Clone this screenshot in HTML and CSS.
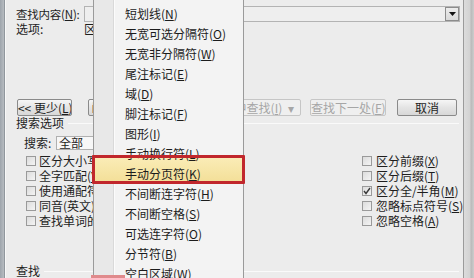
FILE: index.html
```html
<!DOCTYPE html>
<html lang="zh-CN">
<head>
<meta charset="utf-8">
<title>查找和替换</title>
<link rel="stylesheet" href="styles.css">
</head>
<body>
<div class="screen">
  <div class="frame-left"></div>
  <div class="dialog">
    <div class="find-row">
      <span class="label">查找内容(<u>N</u>):</span>
      <div class="combo">
        <span class="combo-btn"><svg width="7" height="4" viewBox="0 0 7 4"><path d="M0 0H7L3.5 4Z" fill="#111"/></svg></span>
      </div>
    </div>
    <div class="opt-row"><span class="label">选项:</span><span>区分全/半角</span></div>
    <div class="btn-row">
      <button class="btn btn-less">&lt;&lt; 更少(<u>L</u>)</button>
      <button class="btn btn-read">阅读突出显示(<u>R</u>)</button>
      <button class="btn btn-in disabled">在以下项中查找(<u>I</u>) <span class="caret">▾</span></button>
      <button class="btn btn-next disabled">查找下一处(<u>F</u>)</button>
      <button class="btn btn-cancel">取消</button>
    </div>
    <div class="group-head"><span>搜索选项</span><span class="rule"></span></div>
    <div class="search-row"><span class="search-label">搜索:</span><div class="select">全部</div></div>
    <div class="checks">
      <div class="col col-left">
        <div class="chk"><span class="box"></span><span>区分大小写(<u>H</u>)</span></div>
        <div class="chk"><span class="box"></span><span>全字匹配(<u>Y</u>)</span></div>
        <div class="chk"><span class="box"></span><span>使用通配符(<u>U</u>)</span></div>
        <div class="chk"><span class="box"></span><span>同音(英文)(<u>K</u>)</span></div>
        <div class="chk"><span class="box"></span><span>查找单词的所有形式(英文)(<u>W</u>)</span></div>
      </div>
      <div class="col col-right">
        <div class="chk"><span class="box"></span><span>区分前缀(<u>X</u>)</span></div>
        <div class="chk"><span class="box"></span><span>区分后缀(<u>T</u>)</span></div>
        <div class="chk"><span class="box checked"><svg width="8" height="8" viewBox="0 0 8 8"><path d="M1 4L3 6.5L7 1" fill="none" stroke="#3a3a3a" stroke-width="1.4"/></svg></span><span>区分全/半角(<u>M</u>)</span></div>
        <div class="chk"><span class="box"></span><span>忽略标点符号(<u>S</u>)</span></div>
        <div class="chk"><span class="box"></span><span>忽略空格(<u>A</u>)</span></div>
      </div>
    </div>
    <div class="group-head foot"><span>查找</span><span class="rule"></span></div>
  </div>
  <div class="frame-right"></div>

  <div class="menu">
    <div class="hl-fill"></div>
    <div class="item">短划线(<u>N</u>)</div>
    <div class="item">无宽可选分隔符(<u>O</u>)</div>
    <div class="item">无宽非分隔符(<u>W</u>)</div>
    <div class="item">尾注标记(<u>E</u>)</div>
    <div class="item">域(<u>D</u>)</div>
    <div class="item">脚注标记(<u>F</u>)</div>
    <div class="item">图形(<u>I</u>)</div>
    <div class="item">手动换行符(<u>L</u>)</div>
    <div class="item">手动分页符(<u>K</u>)</div>
    <div class="item">不间断连字符(<u>H</u>)</div>
    <div class="item">不间断空格(<u>S</u>)</div>
    <div class="item">可选连字符(<u>O</u>)</div>
    <div class="item">分节符(<u>B</u>)</div>
    <div class="item">空白区域(<u>W</u>)</div>
  </div>
  <div class="mark"></div>
  <div class="mark-bottom"></div>
</div>
</body>
</html>
```
FILE: styles.css
```css
* { box-sizing: border-box; }
html, body { margin: 0; padding: 0; }
body {
  width: 474px;
  height: 278px;
  overflow: hidden;
  font-family: "Noto Sans CJK SC", "Noto Sans", sans-serif;
  font-size: 12px;
  color: #1e1e1e;
  background: #cfcfcf;
}
u { text-decoration: underline; text-underline-offset: 1px; }

.screen {
  position: relative;
  display: flex;
  width: 474px;
  height: 278px;
}
.frame-left {
  width: 5px;
  background: linear-gradient(90deg, #9ea5ac, #b4b9be 70%, #7f868d);
}
.dialog {
  flex: 1;
  display: flex;
  flex-direction: column;
  background: #ececec;
  border-left: 1px solid #f8f8f8;
  border-right: 1px solid #9b9b9b;
}
.frame-right {
  width: 10px;
  background: linear-gradient(90deg, #dcdcdc, #d2d2d2 60%, #b9b9b9 70%, #cdcdcd);
}

.label { width: 68px; flex: none; white-space: nowrap; }
.find-row .label { font-size: 11.5px; letter-spacing: -0.2px; }

.find-row {
  display: flex;
  align-items: center;
  height: 16px;
  margin-top: 6px;
  padding-left: 10px;
  padding-right: 3px;
  line-height: 16px;
}
.combo {
  flex: 1;
  height: 16px;
  border: 1px solid #b3b3b3;
  background: #eeeeee;
  display: flex;
  justify-content: flex-end;
  align-items: stretch;
}
.combo-btn {
  width: 14px;
  border: 1px solid #8c8c8c;
  background: linear-gradient(#ececec, #d9d9d9);
  display: flex;
  align-items: center;
  justify-content: center;
}

.opt-row {
  display: flex;
  height: 14px;
  line-height: 14px;
  padding-left: 10px;
}

.btn-row {
  display: flex;
  margin-top: 63px;
  padding-left: 11px;
  height: 17px;
}
.btn {
  height: 17px;
  padding: 0;
  font: inherit;
  font-size: 12px;
  line-height: 15px;
  color: #1e1e1e;
  border: 1px solid #8a8a8a;
  border-radius: 2px;
  background: linear-gradient(#f6f6f6, #e4e4e4 50%, #d8d8d8);
  white-space: nowrap;
  overflow: hidden;
}
.btn.disabled {
  color: #a6a6a6;
  border-color: #c6c6c6;
  background: #efefef;
}
.btn-less { width: 55px; }
.btn-read { width: 88px; margin-left: 16px; font-size: 11px; }
.btn-in { width: 119px; margin-left: 6px; text-align: right; padding-right: 6px; }
.btn-in .caret { margin-left: 3px; }
.btn-next { width: 76px; margin-left: 9px; }
.btn-cancel { width: 60px; margin-left: 11px; }

.group-head {
  display: flex;
  align-items: center;
  height: 14px;
  line-height: 14px;
  padding-left: 10px;
  padding-right: 4px;
}
.group-head .rule {
  flex: 1;
  height: 1px;
  margin-left: 4px;
  background: #d2d2d2;
  border-bottom: 1px solid #fafafa;
}
.group-head.foot { margin-top: 36px; }

.search-row {
  display: flex;
  align-items: center;
  margin-top: 6px;
  height: 14px;
  line-height: 14px;
  padding-left: 18px;
}
.search-label { width: 32px; }
.select {
  width: 110px;
  height: 14px;
  border: 1px solid #b0b0b0;
  background: #f7f7f7;
  padding-left: 2px;
  line-height: 12px;
}

.checks {
  display: flex;
  margin-top: 3px;
  padding-left: 20px;
}
.col { display: flex; flex-direction: column; }
.col-left { width: 336px; }
.chk {
  display: flex;
  align-items: center;
  height: 15px;
  line-height: 15px;
  gap: 3px;
  white-space: nowrap;
}
.col-right .chk { gap: 4px; }
.box {
  width: 10px;
  height: 10px;
  border: 1px solid #9a9a9a;
  background: linear-gradient(135deg, #dcdcdc, #f4f4f4);
  display: flex;
  align-items: center;
  justify-content: center;
  flex: none;
}

/* dropdown menu overlay */
.menu {
  position: absolute;
  left: 93px;
  top: -10px;
  width: 151px;
  padding-top: 13px;
  z-index: 2;
  border: 1px solid #9a9a9a;
  background: linear-gradient(90deg, #e8e8e8 0 19px, #d9d9d9 19px 20px, #fbfbfb 20px 21px, #f3f3f3 21px);
}
.item {
  position: relative;
  z-index: 1;
  height: 20px;
  line-height: 20px;
  padding-left: 31px;
  color: #1c1c1c;
  white-space: nowrap;
}
.hl-fill {
  position: absolute;
  z-index: 0;
  left: 0;
  right: 0;
  top: 167px;
  height: 24px;
  background: linear-gradient(#faecb6, #f3df98);
}
.mark {
  position: absolute;
  z-index: 3;
  left: 92px;
  top: 155px;
  width: 153px;
  height: 29px;
  border: 3px solid #c1272c;
  border-radius: 1px;
}
.mark-bottom {
  position: absolute;
  z-index: 3;
  left: 91px;
  top: 275px;
  width: 34px;
  height: 3px;
  background: #e08a8c;
}
```
